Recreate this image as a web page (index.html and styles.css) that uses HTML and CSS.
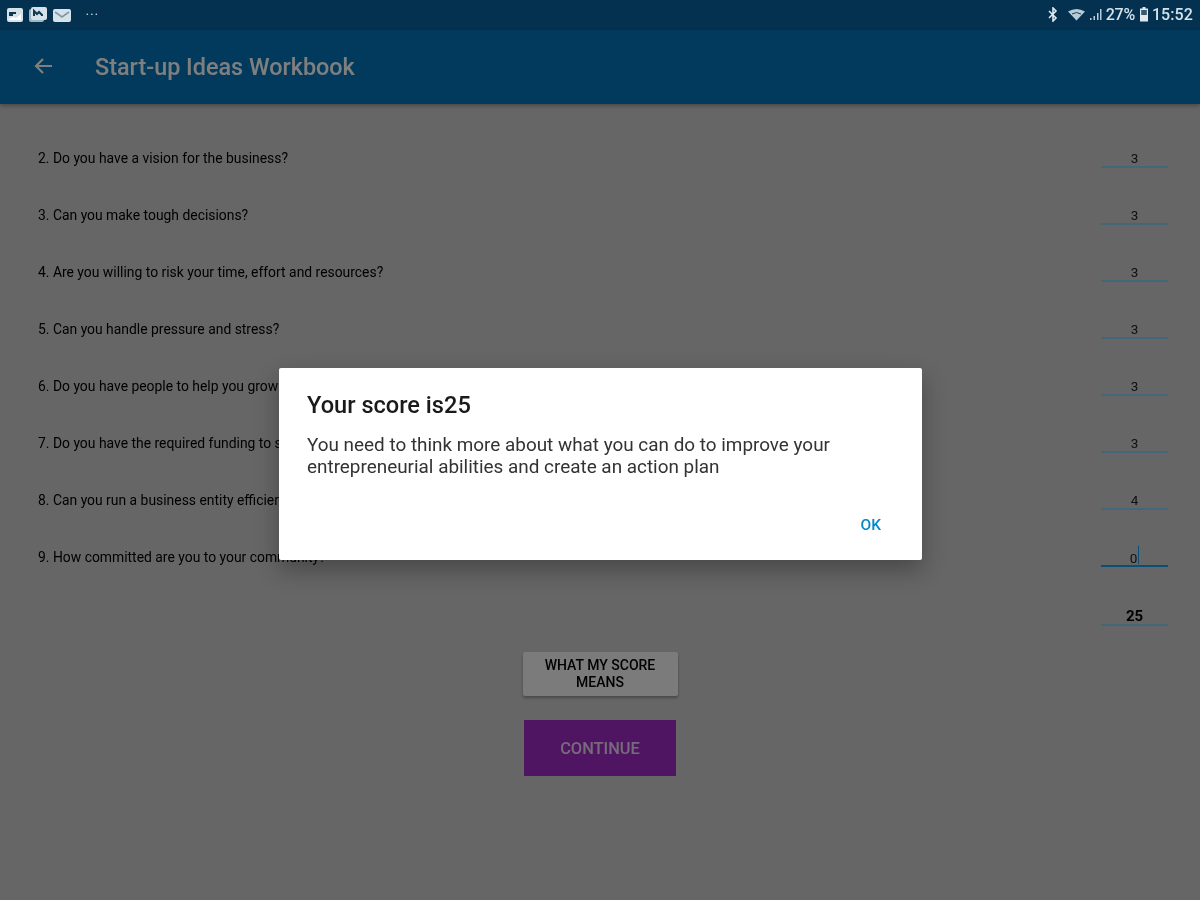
FILE: index.html
```html
<!DOCTYPE html>
<html lang="en">
<head>
<meta charset="utf-8">
<title>Start-up Ideas Workbook</title>
<link rel="stylesheet" href="styles.css">
</head>
<body>
<div class="screen">
  <div class="statusbar">
    <div class="status-left">
      <svg class="note" width="18" height="16" viewBox="0 0 18 16"><rect x="1" y="1" width="16" height="14" rx="2" fill="#d5e2ea"/><path d="M3 6h7M3 8h4" stroke="#12384f" stroke-width="2"/><path d="M3 12l4-2 3 1 5-4v6H3z" fill="#fff"/></svg>
      <svg class="note" width="20" height="17" viewBox="0 0 20 17"><rect x="1" y="3" width="15" height="13" rx="2" fill="#9fb6c4"/><rect x="3" y="1" width="16" height="13" rx="2" fill="#d5e2ea"/><path d="M6 10V5l3 3 2-2 3 3v1" fill="none" stroke="#12384f" stroke-width="2"/></svg>
      <svg class="note" width="20" height="16" viewBox="0 0 20 16"><rect x="1" y="2" width="18" height="13" rx="2" fill="#d5e2ea"/><path d="M3 5l7 5 7-5" fill="none" stroke="#7f98a8" stroke-width="1.6"/></svg>
      <span class="dots">•••</span>
    </div>
    <div class="status-right">
      <svg class="bt" width="10" height="15" viewBox="0 0 10 15"><path d="M1 4l7 7-3 3V1l3 3-7 7" fill="none" stroke="#dfe8ee" stroke-width="1.6"/></svg>
      <svg class="wifi" width="19" height="13" viewBox="0 0 19 13"><path d="M1 3.500Q9.500-1.500 18 3.500L9.500 12.500z" fill="#b9cbd7"/><path d="M5 6Q9.500 3 14 6" fill="none" stroke="#12405c" stroke-width="1"/></svg>
      <svg width="13" height="13" viewBox="0 0 13 13"><path d="M1 10h1.500v2H1zM4.500 8H6v4H4.500zM8 5h1.500v7H8zM11 1h1.500v11H11z" fill="#b9cbd7"/></svg>
      <span class="pct">27%</span>
      <svg class="batt" width="10" height="15" viewBox="0 0 10 15"><path d="M3.500 0h3v1.500H9v13H1v-13h2.500z" fill="#dfe8ee"/><rect x="2.200" y="3" width="5.600" height="5" fill="#38596e"/></svg>
      <span class="clock">15:52</span>
    </div>
  </div>

  <div class="dim-area">
    <header class="appbar">
      <svg class="back" width="20" height="18" viewBox="0 0 20 18"><path d="M19 9H3M10 2L3 9l7 7" fill="none" stroke="#fff" stroke-width="2.200"/></svg>
      <h1 class="title">Start-up Ideas Workbook</h1>
    </header>

    <main class="content">
      <div class="row"><span class="q">2. Do you have a vision for the business?</span><span class="field">3</span></div>
      <div class="row"><span class="q">3. Can you make tough decisions?</span><span class="field">3</span></div>
      <div class="row"><span class="q">4. Are you willing to risk your time, effort and resources?</span><span class="field">3</span></div>
      <div class="row"><span class="q">5. Can you handle pressure and stress?</span><span class="field">3</span></div>
      <div class="row"><span class="q">6. Do you have people to help you grow your business?</span><span class="field">3</span></div>
      <div class="row"><span class="q">7. Do you have the required funding to start the business?</span><span class="field">3</span></div>
      <div class="row"><span class="q">8. Can you run a business entity efficiently?</span><span class="field">4</span></div>
      <div class="row"><span class="q">9. How committed are you to your community?</span><span class="field field-active"><span class="caret">0</span></span></div>
      <div class="row row-total"><span class="field field-total">25</span></div>
      <div class="actions">
        <button class="btn btn-grey">WHAT MY SCORE MEANS</button>
        <button class="btn btn-purple">CONTINUE</button>
      </div>
    </main>

    <div class="scrim"></div>
  </div>

  <div class="dialog">
    <h2 class="dialog-title">Your score is25</h2>
    <p class="dialog-body">You need to think more about what you can do to improve your entrepreneurial abilities and create an action plan</p>
    <div class="dialog-actions"><span class="ok">OK</span></div>
  </div>
</div>
</body>
</html>
```

FILE: styles.css
```css
* { box-sizing: border-box; }
html, body { margin: 0; padding: 0; }
body { font-family: Roboto, "Liberation Sans", sans-serif; background: #666; }

.screen {
  position: relative;
  width: 1200px;
  height: 900px;
  overflow: hidden;
  display: flex;
  flex-direction: column;
  filter: blur(0.7px);
}

.statusbar {
  height: 30px;
  flex: none;
  background: #03314f;
  display: flex;
  justify-content: space-between;
  align-items: center;
  padding: 0 7px 1px 6px;
  color: #d5e2ea;
}
.status-left, .status-right { display: flex; align-items: center; }
.status-left { gap: 4px; }
.dots { font-size: 8px; letter-spacing: 1.800px; margin-left: 10px; color: #c8d6df; }
.status-right { gap: 4px; font-size: 16px; font-weight: 500; }
.bt { margin-right: 5px; }
.wifi { margin-right: -1px; }
.pct { letter-spacing: -0.300px; }
.clock { margin-left: -1px; letter-spacing: 0.100px; }

.dim-area { position: relative; flex: 1; display: flex; flex-direction: column; background: #cdcdcd; }

.appbar {
  height: 74px;
  flex: none;
  background: #0274b8;
  display: flex;
  align-items: center;
  padding: 0 0 2px 33px;
  box-shadow: 0 2px 4px rgba(0,0,0,.3);
}
.back { margin-right: 42px; }
.title { margin: 2px 0 0; font-size: 23.400px; font-weight: 500; color: #fff; }

.content { padding: 26px 32px 0 38px; display: flex; flex-direction: column; }

.row { height: 57px; display: flex; justify-content: space-between; align-items: center; }
.q { margin-bottom: 2px; font-size: 13.900px; color: #000; }
.field {
  width: 67px;
  height: 16px;
  margin-top: 2px;
  border-bottom: 2px solid #8acdf0;
  font-size: 13.500px;
  line-height: 12px;
  text-align: center;
  color: #222;
}
.field-active { height: 17px; border-bottom: 2px solid #149ef0; }
.caret { display: inline-block; height: 18px; margin-top: -4px; padding-right: 1px; border-right: 1.500px solid #149ef0; line-height: 24px; }
.row-total { height: 59px; justify-content: flex-end; padding-top: 2px; }
.field-total { font-size: 15px; font-weight: 700; color: #000; line-height: 15px; height: 17px; margin-top: 2px; }

.actions { display: flex; flex-direction: column; align-items: center; gap: 24px; margin-top: 7px; margin-left: -6px; }
.btn { border: 0; border-radius: 2px; font-family: inherit; font-weight: 500; font-size: 14px; }
.btn-grey { width: 155px; height: 44px; padding: 0 16px; line-height: 17px; background: #f6f6f6; color: #000; box-shadow: 0 2px 3px rgba(0,0,0,.3); }
.btn-purple { width: 152px; height: 56px; background: #a02ac4; color: #ecd6f4; font-size: 16.400px; border-radius: 0; }

.scrim { position: absolute; inset: 0; background: rgba(0,0,0,.5); }

.dialog {
  position: absolute;
  left: 279px;
  top: 368px;
  width: 643px;
  height: 192px;
  background: #fff;
  border-radius: 2px;
  box-shadow: 0 10px 24px rgba(0,0,0,.3);
  padding: 21px 28px 0;
  display: flex;
  flex-direction: column;
}
.dialog-title { margin: 0; font-size: 23.600px; line-height: 32px; font-weight: 500; color: #1a1a1a; }
.dialog-body { margin: 13px 0 0; font-size: 18.900px; line-height: 22px; color: #333; }
.dialog-actions { margin-top: auto; display: flex; justify-content: flex-end; padding: 0 13px 26px 0; }
.ok { font-size: 15.500px; font-weight: 500; color: #0288c8; }
```
